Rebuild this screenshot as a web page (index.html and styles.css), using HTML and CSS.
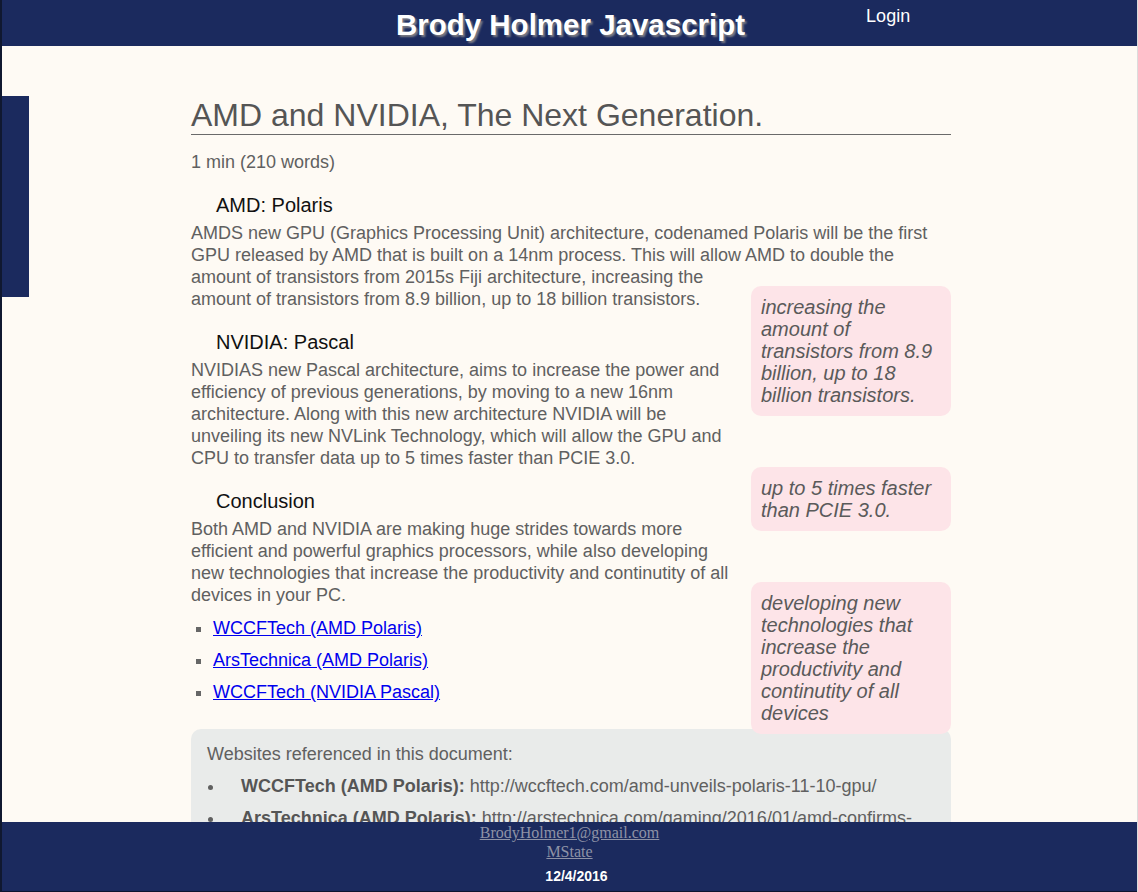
FILE: index.html
```html
<!DOCTYPE html>
<html lang="en">
<head>
<meta charset="utf-8">
<title>AMD and NVIDIA, The Next Generation.</title>
<link rel="stylesheet" href="styles.css">
</head>
<body>
<header class="topbar">
  <div class="topbar-side"></div>
  <div class="site-title">Brody Holmer Javascript</div>
  <div class="topbar-side"><a class="login" href="#">Login</a></div>
</header>

<nav class="sidenav"></nav>

<main class="article">
  <h1 class="article-title">AMD and NVIDIA, The Next Generation.</h1>
  <p class="readtime">1 min (210 words)</p>

  <h3 class="section-head">AMD: Polaris</h3>
  <p class="body-text">AMDS new GPU (Graphics Processing Unit) architecture, codenamed Polaris will be the first GPU released by AMD that is built on a 14nm process. This will allow AMD to double the <span class="pullquote">increasing the amount of transistors from 8.9 billion, up to 18 billion transistors.</span>amount of transistors from 2015s Fiji architecture, increasing the amount of transistors from 8.9 billion, up to 18 billion transistors.</p>

  <h3 class="section-head">NVIDIA: Pascal</h3>
  <p class="body-text">NVIDIAS new Pascal architecture, aims to increase the power and efficiency of previous generations, by moving to a new 16nm architecture. Along with this new architecture NVIDIA will be unveiling its new NVLink Technology, which will allow the GPU and CPU to transfer data <span class="pullquote">up to 5 times faster than PCIE 3.0.</span>up to 5 times faster than PCIE 3.0.</p>

  <h3 class="section-head">Conclusion</h3>
  <p class="body-text">Both AMD and NVIDIA are making huge strides towards more efficient and powerful graphics processors, while also developing <span class="pullquote">developing new technologies that increase the productivity and continutity of all devices</span>new technologies that increase the productivity and continutity of all devices in your PC.</p>

  <ul class="links">
    <li><a href="#">WCCFTech (AMD Polaris)</a></li>
    <li><a href="#">ArsTechnica (AMD Polaris)</a></li>
    <li><a href="#">WCCFTech (NVIDIA Pascal)</a></li>
  </ul>

  <section class="refs">
    <p class="refs-head">Websites referenced in this document:</p>
    <ul class="refs-list">
      <li><b>WCCFTech (AMD Polaris):</b> http://wccftech.com/amd-unveils-polaris-11-10-gpu/</li>
      <li><b>ArsTechnica (AMD Polaris):</b> http://arstechnica.com/gaming/2016/01/amd-confirms-polaris-gpus-built-on-14nm-finfet-process/</li>
      <li><b>WCCFTech (NVIDIA Pascal):</b> http://wccftech.com/nvidia-pascal-gpu-nvlink/</li>
    </ul>
  </section>
</main>

<footer class="footer">
  <div class="footer-links">
    <a href="#">BrodyHolmer1@gmail.com</a><br>
    <a href="#">MState</a>
  </div>
  <div class="footer-date">12/4/2016</div>
</footer>
</body>
</html>
```

FILE: styles.css
```css
html {
  scrollbar-width: none;
}

body {
  margin: 0;
  background: #fefaf4;
  border-left: 2px solid #101830;
  border-right: 1px solid #dcdcdc;
  font-family: "Liberation Sans", Arial, sans-serif;
  min-height: 892px;
  box-sizing: border-box;
}

.topbar {
  height: 46px;
  background: #1b2a5e;
  display: grid;
  grid-template-columns: 1fr auto 1fr;
  align-items: start;
}

.site-title {
  color: #ffffff;
  font-weight: bold;
  font-size: 29.5px;
  line-height: 34px;
  margin-top: 8px;
  text-shadow: 2px 2px 2px #7c7c84;
  margin-left: 2px;
}

.login {
  display: inline-block;
  margin-left: 121px;
  margin-top: 6px;
  color: #ffffff;
  font-size: 18px;
  line-height: 21px;
  text-decoration: none;
}

.sidenav {
  position: fixed;
  left: 2px;
  top: 96px;
  width: 27px;
  height: 201px;
  background: #1b2a5e;
}

.article {
  width: 760px;
  margin-left: 189px;
  padding-bottom: 80px;
}

.article-title {
  margin: 51px 0 0;
  font-size: 32px;
  line-height: 37px;
  font-weight: normal;
  color: #555555;
  border-bottom: 1px solid #6a6a6a;
}

.readtime {
  margin: 16px 0 0;
  font-size: 18px;
  line-height: 22px;
  color: #606060;
}

.section-head {
  margin: 21px 0 5px;
  padding-left: 25px;
  font-size: 20px;
  line-height: 23px;
  font-weight: normal;
  color: #111111;
}

.body-text {
  margin: 0;
  font-size: 18px;
  line-height: 22px;
  color: #606060;
}

.pullquote {
  float: right;
  width: 180px;
  margin: 20px 0 20px 20px;
  padding: 10px;
  border-radius: 10px;
  background: #fde4e8;
  font-style: italic;
  font-size: 20px;
  line-height: 22px;
  color: #5a5a5a;
}

.links {
  margin: 11px 0 26px;
  padding-left: 22px;
  list-style: square;
  font-size: 18px;
  line-height: 22px;
  color: #666666;
}

.links li + li {
  margin-top: 10px;
}

.links a {
  color: #0000ee;
}

.refs {
  background: #e9ebea;
  border-radius: 10px;
  padding: 14px 16px;
  font-size: 18px;
  line-height: 22px;
  color: #606060;
}

.refs-head {
  margin: 0;
}

.refs-list {
  margin: 10px 0 0;
  padding-left: 18px;
  list-style: disc;
}

.refs-list li {
  padding-left: 16px;
}

.refs-list li + li {
  margin-top: 10px;
}

.refs-list b {
  color: #555555;
}

.footer {
  position: fixed;
  left: 2px;
  right: 1px;
  bottom: 0;
  height: 69px;
  background: #1b2a5e;
  border-bottom: 1px solid #0e1530;
  text-align: center;
}

.footer-links {
  padding-top: 1px;
  font-family: "Liberation Serif", "Times New Roman", serif;
  font-size: 16px;
  line-height: 19px;
}

.footer-links a {
  color: #8e92a6;
}

.footer-date {
  margin-top: 7px;
  padding-left: 14px;
  color: #ffffff;
  font-size: 14px;
  line-height: 16px;
  font-weight: bold;
}
```
